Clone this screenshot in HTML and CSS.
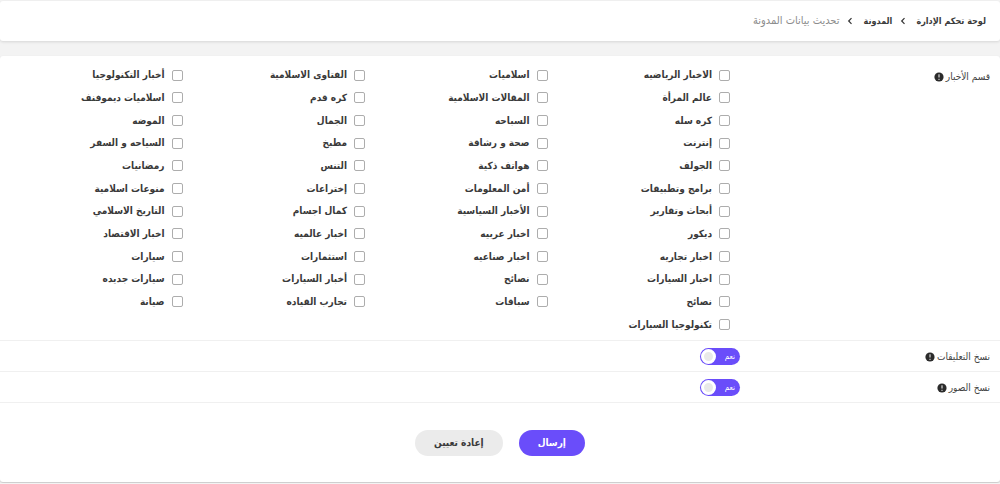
FILE: index.html
```html
<!DOCTYPE html>
<html lang="ar" dir="rtl">
<head>
<meta charset="utf-8">
<meta name="viewport" content="width=device-width, initial-scale=1">
<title>تحديث بيانات المدونة</title>
<link rel="stylesheet" href="styles.css">
</head>
<body>
<nav class="breadcrumb">
  <a class="crumb" href="#">لوحة تحكم الإدارة</a>
  <svg class="chevron" viewBox="0 0 6 8"><path d="M4.5 1.2 1.7 4l2.8 2.8"/></svg>
  <a class="crumb" href="#">المدونة</a>
  <svg class="chevron" viewBox="0 0 6 8"><path d="M4.5 1.2 1.7 4l2.8 2.8"/></svg>
  <span class="crumb-current">تحديث بيانات المدونة</span>
</nav>
<form class="panel">
  <div class="row">
    <div class="row-label" id="sections">قسم الأخبار <svg class="info" viewBox="0 0 10 10"><circle cx="5" cy="5" r="4.6"/><path d="M5 2.3v3.2M5 6.8v1.1"/></svg></div>
    <div class="options" role="group" aria-labelledby="sections">
      <label class="option"><input type="checkbox">الاخبار الرياضيه</label>
      <label class="option"><input type="checkbox">اسلاميات</label>
      <label class="option"><input type="checkbox">الفتاوى الاسلامية</label>
      <label class="option"><input type="checkbox">أخبار التكنولوجيا</label>
      <label class="option"><input type="checkbox">عالم المرأة</label>
      <label class="option"><input type="checkbox">المقالات الاسلامية</label>
      <label class="option"><input type="checkbox">كره قدم</label>
      <label class="option"><input type="checkbox">اسلاميات ديموفنف</label>
      <label class="option"><input type="checkbox">كره سله</label>
      <label class="option"><input type="checkbox">السباحه</label>
      <label class="option"><input type="checkbox">الجمال</label>
      <label class="option"><input type="checkbox">الموضه</label>
      <label class="option"><input type="checkbox">إنترنت</label>
      <label class="option"><input type="checkbox">صحة و رشاقة</label>
      <label class="option"><input type="checkbox">مطبخ</label>
      <label class="option"><input type="checkbox">السياحه و السفر</label>
      <label class="option"><input type="checkbox">الجولف</label>
      <label class="option"><input type="checkbox">هواتف ذكية</label>
      <label class="option"><input type="checkbox">التنس</label>
      <label class="option"><input type="checkbox">رمضانيات</label>
      <label class="option"><input type="checkbox">برامج وتطبيقات</label>
      <label class="option"><input type="checkbox">أمن المعلومات</label>
      <label class="option"><input type="checkbox">إختراعات</label>
      <label class="option"><input type="checkbox">منوعات اسلامية</label>
      <label class="option"><input type="checkbox">أبحاث وتقارير</label>
      <label class="option"><input type="checkbox">الأخبار السياسية</label>
      <label class="option"><input type="checkbox">كمال اجسام</label>
      <label class="option"><input type="checkbox">التاريخ الاسلامي</label>
      <label class="option"><input type="checkbox">ديكور</label>
      <label class="option"><input type="checkbox">اخبار عربيه</label>
      <label class="option"><input type="checkbox">اخبار عالميه</label>
      <label class="option"><input type="checkbox">اخبار الاقتصاد</label>
      <label class="option"><input type="checkbox">اخبار تجاريه</label>
      <label class="option"><input type="checkbox">اخبار صناعيه</label>
      <label class="option"><input type="checkbox">استثمارات</label>
      <label class="option"><input type="checkbox">سيارات</label>
      <label class="option"><input type="checkbox">اخبار السيارات</label>
      <label class="option"><input type="checkbox">نصائح</label>
      <label class="option"><input type="checkbox">أخبار السيارات</label>
      <label class="option"><input type="checkbox">سيارات جديده</label>
      <label class="option"><input type="checkbox">نصائح</label>
      <label class="option"><input type="checkbox">سباقات</label>
      <label class="option"><input type="checkbox">تجارب القياده</label>
      <label class="option"><input type="checkbox">صيانة</label>
      <label class="option"><input type="checkbox">تكنولوجيا السيارات</label>
    </div>
  </div>
  <div class="row row-switch">
    <label class="row-label" for="copy-comments">نسخ التعليقات <svg class="info" viewBox="0 0 10 10"><circle cx="5" cy="5" r="4.6"/><path d="M5 2.3v3.2M5 6.8v1.1"/></svg></label>
    <label class="switch"><input id="copy-comments" type="checkbox" checked><span class="switch-text">نعم</span><span class="knob"></span></label>
  </div>
  <div class="row row-switch">
    <label class="row-label" for="copy-images">نسخ الصور <svg class="info" viewBox="0 0 10 10"><circle cx="5" cy="5" r="4.6"/><path d="M5 2.3v3.2M5 6.8v1.1"/></svg></label>
    <label class="switch"><input id="copy-images" type="checkbox" checked><span class="switch-text">نعم</span><span class="knob"></span></label>
  </div>
  <div class="actions">
    <button class="btn btn-primary" type="submit">إرسال</button>
    <button class="btn btn-muted" type="reset">إعادة تعيين</button>
  </div>
</form>
</body>
</html>
```
FILE: styles.css
```css
* { box-sizing: border-box; }

body {
  margin: 0;
  padding: 1px 0;
  background: #f3f3f3;
  color: #3a3a3a;
  font: 10px/16px "DejaVu Sans Condensed", "DejaVu Sans", sans-serif;
}

.breadcrumb {
  display: flex;
  align-items: center;
  padding: 12px 14px;
  margin-bottom: 15px;
  background: #fff;
  border-radius: 3px;
  box-shadow: 0 1px 3px rgba(0, 0, 0, 0.12);
}

.crumb {
  color: #3a3a3a;
  font-size: 9px;
  font-weight: bold;
  text-decoration: none;
}

.crumb-current {
  color: #8c8c8c;
  font-size: 11px;
}

.chevron {
  width: 6px;
  height: 8px;
  margin: 0 10px 0 8px;
  fill: none;
  stroke: #333;
  stroke-width: 1.2;
}

.panel {
  background: #fff;
  border-radius: 3px;
  box-shadow: 0 1px 2px rgba(0, 0, 0, 0.2);
}

.row {
  display: grid;
  grid-template-columns: 26% 74%;
  padding: 8px 0 4px;
  border-bottom: 1px solid #f0f0f0;
}

.row-label {
  display: flex;
  align-items: center;
  align-self: start;
  gap: 2px;
  padding: 5px 10px 0 0;
  color: #444;
}

.info {
  width: 10px;
  height: 10px;
  fill: #2b2b2b;
  stroke: #fff;
}

.info circle { stroke: none; }

.options {
  display: grid;
  grid-template-columns: repeat(4, 1fr);
  grid-auto-rows: 1fr;
  min-height: 272px;
  padding-right: 10px;
}

.option {
  display: flex;
  align-items: center;
  gap: 7px;
  font-weight: bold;
}

.option input {
  appearance: none;
  width: 11px;
  height: 11px;
  margin: 0;
  background: #fff;
  border: 1px solid #adadad;
  border-radius: 2px;
}

.option input:checked { background: #6a4dfa; }

.row-switch {
  align-items: center;
  padding: 7px 0 6px;
}

.row-switch .row-label {
  align-self: center;
  padding-top: 0;
}

.switch {
  position: relative;
  display: flex;
  align-items: center;
  justify-content: space-between;
  width: 40px;
  height: 17px;
  padding: 1px 5px 1px 1px;
  background: #6a4dfa;
  border-radius: 9px;
}

.switch input {
  position: absolute;
  inset: 0;
  margin: 0;
  opacity: 0;
}

.switch-text {
  color: #fff;
  font-size: 8px;
  line-height: 14px;
}

.knob {
  width: 15px;
  height: 15px;
  background: #e9e9e9;
  border: 3px solid #fff;
  border-radius: 50%;
}

.actions {
  display: flex;
  justify-content: center;
  gap: 16px;
  padding: 27px 0 26px;
}

.btn {
  padding: 5px 19px;
  border: 0;
  border-radius: 13px;
  font: inherit;
  font-weight: bold;
}

.btn-primary {
  background: #6a4dfa;
  color: #fff;
}

.btn-muted {
  background: #ebebeb;
  color: #3a3a3a;
}
```
